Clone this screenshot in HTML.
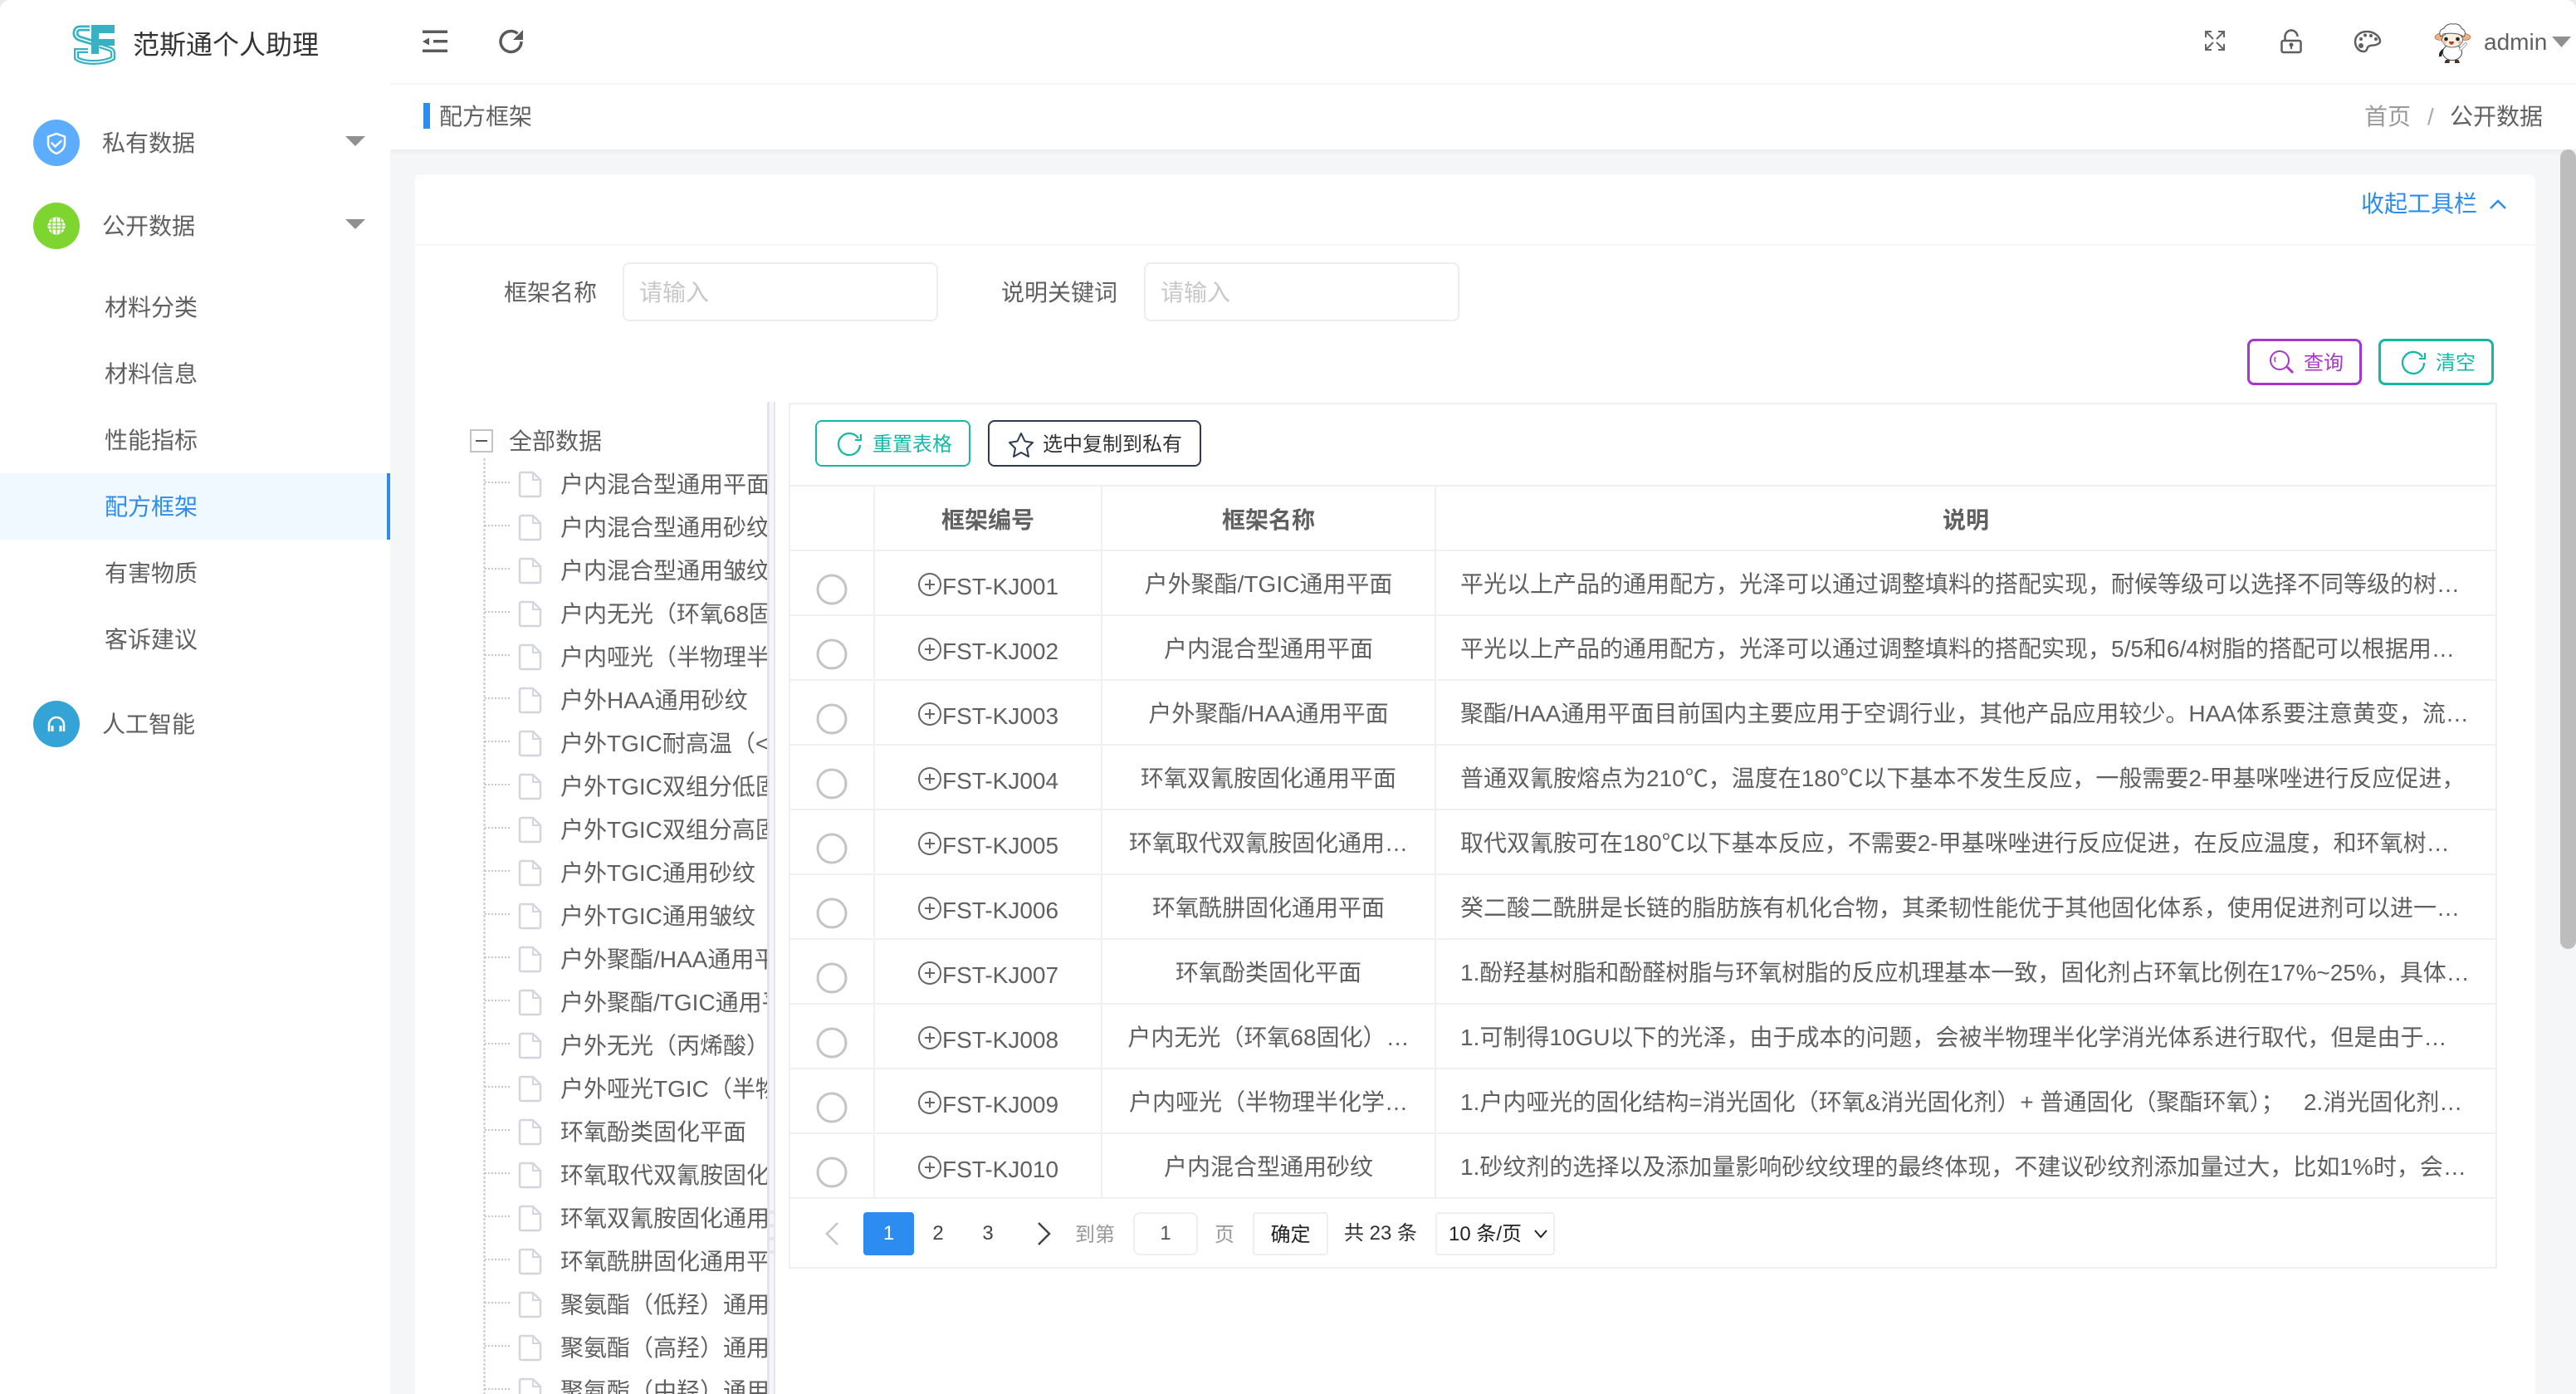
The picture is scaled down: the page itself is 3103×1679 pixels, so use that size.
<!DOCTYPE html>
<html lang="zh-CN"><head><meta charset="utf-8"><title>范斯通个人助理</title>
<style>
html,body{margin:0;padding:0;width:3103px;height:1679px;overflow:hidden;background:#fff}
body{position:relative;font-family:"Liberation Sans","Noto Sans CJK SC",sans-serif;font-size:28px;color:#606060}
.b{position:absolute;box-sizing:border-box}
.t{position:absolute;white-space:nowrap;line-height:40px;height:40px}
.c{text-align:center}
.m{color:#606060}
.tr{left:675px;width:249px;overflow:hidden;position:absolute;white-space:nowrap;line-height:40px;height:40px;color:#606060}
.l{position:absolute;background:#f0f0f0}
.s{font-size:24px}
svg{position:absolute;left:0;top:0}
</style></head><body>
<div class="b" style="left:470px;top:180px;width:2633px;height:1499px;background:#f4f6f8"></div>
<div class="b" style="left:470px;top:0;width:2633px;height:180px;background:#fff;box-shadow:0 2px 8px rgba(0,0,0,.06)"></div>
<div class="l" style="left:470px;top:100px;width:2633px;height:2px;background:#f5f5f5"></div>
<div class="b" style="left:0;top:0;width:470px;height:1679px;background:#fff"></div>
<div class="b" style="left:500px;top:210px;width:2554px;height:1469px;background:#fff;border-radius:8px 8px 0 0"></div>
<div class="l" style="left:500px;top:294px;width:2554px;height:2px;background:#f6f6f6"></div>
<div class="b" style="left:3084px;top:180px;width:19px;height:963px;background:#bdbdbd;border-radius:10px"></div>
<!-- sidebar -->
<div class="t" style="left:160px;top:34px;font-size:32px;color:#333">范斯通个人助理</div>
<div class="t m" style="left:123px;top:153px">私有数据</div>
<div class="t m" style="left:123px;top:253px">公开数据</div>
<div class="t m" style="left:126px;top:351px">材料分类</div>
<div class="t m" style="left:126px;top:431px">材料信息</div>
<div class="t m" style="left:126px;top:511px">性能指标</div>
<div class="b" style="left:0;top:570px;width:470px;height:80px;background:#f0f9ff;border-right:4px solid #2d8cf0"></div>
<div class="t" style="left:126px;top:591px;color:#2d8cf0">配方框架</div>
<div class="t m" style="left:126px;top:671px">有害物质</div>
<div class="t m" style="left:126px;top:751px">客诉建议</div>
<div class="t m" style="left:123px;top:853px">人工智能</div>
<!-- top -->
<div class="b" style="left:510px;top:124px;width:8px;height:31px;background:#2d8cf0"></div>
<div class="t m" style="left:529px;top:121px">配方框架</div>
<div class="t" style="left:2848px;top:121px;color:#999">首页</div>
<div class="t" style="left:2924px;top:121px;color:#aaa">/</div>
<div class="t m" style="left:2951px;top:121px">公开数据</div>
<div class="t m" style="left:2992px;top:31px;font-size:28px">admin</div>
<div class="t" style="left:2844px;top:226px;color:#2d8cf0">收起工具栏</div>
<!-- form -->
<div class="t m" style="left:607px;top:333px">框架名称</div>
<div class="b" style="left:750px;top:316px;width:380px;height:71px;border:2px solid #ededed;border-radius:8px"></div>
<div class="t" style="left:770px;top:333px;color:#c8c8c8">请输入</div>
<div class="t m" style="left:1206px;top:333px">说明关键词</div>
<div class="b" style="left:1378px;top:316px;width:380px;height:71px;border:2px solid #ededed;border-radius:8px"></div>
<div class="t" style="left:1398px;top:333px;color:#c8c8c8">请输入</div>
<div class="b" style="left:2707px;top:408px;width:138px;height:56px;border:3px solid #a835cc;border-radius:8px"></div>
<div class="t s" style="left:2775px;top:418px;color:#a835cc">查询</div>
<div class="b" style="left:2865px;top:408px;width:139px;height:56px;border:3px solid #14b8a6;border-radius:8px"></div>
<div class="t s" style="left:2934px;top:418px;color:#14b8a6">清空</div>
<!-- tree -->
<div class="b" style="left:566px;top:517px;width:28px;height:28px;border:2px solid #c0c4d0"></div>
<div class="b" style="left:573px;top:530px;width:14px;height:2px;background:#555"></div>
<div class="t m" style="left:613px;top:512px">全部数据</div>
<div class="tr" style="top:564px">户内混合型通用平面</div>
<div class="tr" style="top:616px">户内混合型通用砂纹</div>
<div class="tr" style="top:668px">户内混合型通用皱纹</div>
<div class="tr" style="top:720px">户内无光（环氧68固化）</div>
<div class="tr" style="top:772px">户内哑光（半物理半化学</div>
<div class="tr" style="top:824px">户外HAA通用砂纹</div>
<div class="tr" style="top:876px">户外TGIC耐高温（&lt;450</div>
<div class="tr" style="top:928px">户外TGIC双组分低固化</div>
<div class="tr" style="top:980px">户外TGIC双组分高固化</div>
<div class="tr" style="top:1032px">户外TGIC通用砂纹</div>
<div class="tr" style="top:1084px">户外TGIC通用皱纹</div>
<div class="tr" style="top:1136px">户外聚酯/HAA通用平面</div>
<div class="tr" style="top:1188px">户外聚酯/TGIC通用平面</div>
<div class="tr" style="top:1240px">户外无光（丙烯酸）</div>
<div class="tr" style="top:1292px">户外哑光TGIC（半物理半化学）</div>
<div class="tr" style="top:1344px">环氧酚类固化平面</div>
<div class="tr" style="top:1396px">环氧取代双氰胺固化通用</div>
<div class="tr" style="top:1448px">环氧双氰胺固化通用平面</div>
<div class="tr" style="top:1500px">环氧酰肼固化通用平面</div>
<div class="tr" style="top:1552px">聚氨酯（低羟）通用平面</div>
<div class="tr" style="top:1604px">聚氨酯（高羟）通用平面</div>
<div class="tr" style="top:1656px">聚氨酯（中羟）通用平面</div>
<div class="b" style="left:924px;top:484px;width:3px;height:1195px;background:#e4e4ec"></div>
<div class="b" style="left:927px;top:484px;width:5px;height:1195px;background:#f6f6f8"></div>
<div class="b" style="left:932px;top:484px;width:2px;height:1195px;background:#e4e4ec"></div>
<!-- table frame -->
<div class="b" style="left:950px;top:485px;width:2058px;height:1043px;border:2px solid #f0f0f0;background:#fff"></div>
<div class="l" style="left:952px;top:584px;width:2054px;height:2px"></div>
<div class="l" style="left:952px;top:662px;width:2054px;height:2px"></div>
<div class="l" style="left:952px;top:740px;width:2054px;height:2px"></div>
<div class="l" style="left:952px;top:818px;width:2054px;height:2px"></div>
<div class="l" style="left:952px;top:896px;width:2054px;height:2px"></div>
<div class="l" style="left:952px;top:974px;width:2054px;height:2px"></div>
<div class="l" style="left:952px;top:1052px;width:2054px;height:2px"></div>
<div class="l" style="left:952px;top:1130px;width:2054px;height:2px"></div>
<div class="l" style="left:952px;top:1208px;width:2054px;height:2px"></div>
<div class="l" style="left:952px;top:1286px;width:2054px;height:2px"></div>
<div class="l" style="left:952px;top:1364px;width:2054px;height:2px"></div>
<div class="l" style="left:952px;top:1442px;width:2054px;height:2px"></div>
<div class="l" style="left:1052px;top:586px;width:2px;height:856px"></div>
<div class="l" style="left:1326px;top:586px;width:2px;height:856px"></div>
<div class="l" style="left:1728px;top:586px;width:2px;height:856px"></div>
<!-- toolbar -->
<div class="b" style="left:982px;top:506px;width:187px;height:56px;border:2.5px solid #14b8a6;border-radius:8px"></div>
<div class="t s" style="left:1051px;top:516px;color:#14b8a6">重置表格</div>
<div class="b" style="left:1190px;top:506px;width:257px;height:56px;border:2.5px solid #2c3a52;border-radius:8px"></div>
<div class="t s" style="left:1256px;top:516px;color:#333">选中复制到私有</div>
<!-- header -->
<div class="t c" style="left:1054px;width:272px;top:607px;font-weight:bold">框架编号</div>
<div class="t c" style="left:1328px;width:400px;top:607px;font-weight:bold">框架名称</div>
<div class="t c" style="left:1730px;width:1276px;top:607px;font-weight:bold">说明</div>
<!-- rows -->
<div class="t" style="left:1135px;top:687px">FST-KJ001</div><div class="t c" style="left:1328px;width:400px;top:684px">户外聚酯/TGIC通用平面</div><div class="t" style="left:1759px;top:684px">平光以上产品的通用配方，光泽可以通过调整填料的搭配实现，耐候等级可以选择不同等级的树…</div>
<div class="t" style="left:1135px;top:765px">FST-KJ002</div><div class="t c" style="left:1328px;width:400px;top:762px">户内混合型通用平面</div><div class="t" style="left:1759px;top:762px">平光以上产品的通用配方，光泽可以通过调整填料的搭配实现，5/5和6/4树脂的搭配可以根据用…</div>
<div class="t" style="left:1135px;top:843px">FST-KJ003</div><div class="t c" style="left:1328px;width:400px;top:840px">户外聚酯/HAA通用平面</div><div class="t" style="left:1759px;top:840px">聚酯/HAA通用平面目前国内主要应用于空调行业，其他产品应用较少。HAA体系要注意黄变，流…</div>
<div class="t" style="left:1135px;top:921px">FST-KJ004</div><div class="t c" style="left:1328px;width:400px;top:918px">环氧双氰胺固化通用平面</div><div class="t" style="left:1759px;top:918px">普通双氰胺熔点为210℃，温度在180℃以下基本不发生反应，一般需要2-甲基咪唑进行反应促进，</div>
<div class="t" style="left:1135px;top:999px">FST-KJ005</div><div class="t c" style="left:1328px;width:400px;top:996px">环氧取代双氰胺固化通用…</div><div class="t" style="left:1759px;top:996px">取代双氰胺可在180℃以下基本反应，不需要2-甲基咪唑进行反应促进，在反应温度，和环氧树…</div>
<div class="t" style="left:1135px;top:1077px">FST-KJ006</div><div class="t c" style="left:1328px;width:400px;top:1074px">环氧酰肼固化通用平面</div><div class="t" style="left:1759px;top:1074px">癸二酸二酰肼是长链的脂肪族有机化合物，其柔韧性能优于其他固化体系，使用促进剂可以进一…</div>
<div class="t" style="left:1135px;top:1155px">FST-KJ007</div><div class="t c" style="left:1328px;width:400px;top:1152px">环氧酚类固化平面</div><div class="t" style="left:1759px;top:1152px">1.酚羟基树脂和酚醛树脂与环氧树脂的反应机理基本一致，固化剂占环氧比例在17%~25%，具体…</div>
<div class="t" style="left:1135px;top:1233px">FST-KJ008</div><div class="t c" style="left:1328px;width:400px;top:1230px">户内无光（环氧68固化）…</div><div class="t" style="left:1759px;top:1230px">1.可制得10GU以下的光泽，由于成本的问题，会被半物理半化学消光体系进行取代，但是由于…</div>
<div class="t" style="left:1135px;top:1311px">FST-KJ009</div><div class="t c" style="left:1328px;width:400px;top:1308px">户内哑光（半物理半化学…</div><div class="t" style="left:1759px;top:1308px">1.户内哑光的固化结构=消光固化（环氧&amp;消光固化剂）+ 普通固化（聚酯环氧）；&nbsp;&nbsp;&nbsp;2.消光固化剂…</div>
<div class="t" style="left:1135px;top:1389px">FST-KJ010</div><div class="t c" style="left:1328px;width:400px;top:1386px">户内混合型通用砂纹</div><div class="t" style="left:1759px;top:1386px">1.砂纹剂的选择以及添加量影响砂纹纹理的最终体现，不建议砂纹剂添加量过大，比如1%时，会…</div>
<!-- pagination -->
<div class="b" style="left:1040px;top:1460px;width:61px;height:52px;background:#2d8cf0;border-radius:4px"></div>
<div class="t s c" style="left:1040px;width:61px;top:1466px;color:#fff">1</div>
<div class="t s c" style="left:1100px;width:60px;top:1466px;color:#444">2</div>
<div class="t s c" style="left:1160px;width:60px;top:1466px;color:#444">3</div>
<div class="t s" style="left:1295px;top:1468px;color:#999">到第</div>
<div class="b" style="left:1365px;top:1460px;width:78px;height:52px;border:2px solid #eee;border-radius:8px"></div>
<div class="t s c" style="left:1365px;width:78px;top:1466px;color:#555">1</div>
<div class="t s" style="left:1463px;top:1468px;color:#999">页</div>
<div class="b" style="left:1509px;top:1460px;width:91px;height:52px;border:2px solid #eee;border-radius:4px"></div>
<div class="t s c" style="left:1509px;width:91px;top:1468px;color:#222">确定</div>
<div class="t s" style="left:1619px;top:1466px;color:#333">共 23 条</div>
<div class="b" style="left:1729px;top:1460px;width:144px;height:52px;border:2px solid #eee;border-radius:4px"></div>
<div class="t s" style="left:1745px;top:1467px;color:#222">10 条/页</div>
<!-- icons -->
<svg width="3103" height="1679" viewBox="0 0 3103 1679" fill="none">
<defs>
<symbol id="f" overflow="visible"><path d="M2 1h14l9 9v18a2 2 0 0 1-2 2H2a2 2 0 0 1-2-2V3a2 2 0 0 1 2-2z" stroke="#d2d6e0" stroke-width="2.5"/><path d="M16 1v9h9" stroke="#d2d6e0" stroke-width="2"/></symbol>
<symbol id="p" overflow="visible"><circle cx="1120" cy="704" r="13" stroke="#666" stroke-width="2"/><path d="M1114 704h12M1120 698v12" stroke="#666" stroke-width="2"/><circle cx="1002" cy="710" r="17" stroke="#c4c4c4" stroke-width="3"/></symbol>
</defs>
<!-- window corners -->
<path d="M0 12V0h12A12 12 0 0 0 0 12zM3103 12V0h-12a12 12 0 0 1 12 12z" fill="#eaeaea"/>
<!-- logo -->
<g fill="none">
<path d="M108 34H97c-5 0-6 3-6 6 0 4 3 6 7 7l13 4" stroke="#38b2c2" stroke-width="7"/>
<path d="M108 34H97c-5 0-6 3-6 6 0 4 3 6 7 7l13 4" stroke="#fff" stroke-width="1.600"/>
<path d="M120 55l12 4c3 1 4 3 4 5v6c-5 3-14 5-23 5-10 0-18-2-21-5v-9h14" stroke="#38b2c2" stroke-width="6"/>
<path d="M120 55l12 4c3 1 4 3 4 5v6c-5 3-14 5-23 5-10 0-18-2-21-5v-9h14" stroke="#fff" stroke-width="1.500"/>
</g>
<path d="M110 30h28v10h-19v7h19v8h-19v10h-9z" fill="#38b2c2"/>
<!-- sidebar icons -->
<circle cx="68" cy="172" r="28" fill="#5cadff"/>
<path d="M68 161l10 3.500v8c0 6-4 10-10 12.500-6-2.500-10-6.500-10-12.500v-8z" stroke="#fff" stroke-width="2.500" stroke-linejoin="round"/>
<path d="M62.500 172.500l4 4 7-6.500" stroke="#fff" stroke-width="2.500" stroke-linecap="round"/>
<circle cx="68" cy="272" r="28" fill="#7ed530"/>
<circle cx="68" cy="272" r="10.500" fill="#fff"/>
<g stroke="#7ed530" stroke-width="1.300"><path d="M58 268h20M58 272h20M58 276h20M68 262v20M63.500 263c-2 6-2 12 0 18M72.500 263c2 6 2 12 0 18"/></g>
<circle cx="68" cy="872" r="28" fill="#34a4d6"/>
<path d="M59 881v-8a9 9 0 0 1 18 0v8" stroke="#fff" stroke-width="2.500"/>
<path d="M63 874v7M73 874v7" stroke="#fff" stroke-width="3"/>
<path d="M416 164h24l-12 12zM416 264h24l-12 12z" fill="#909090"/>
<!-- header icons -->
<g fill="#5a5a5a"><rect x="509" y="36.500" width="30" height="3.500"/><rect x="522" y="48" width="17" height="3.500"/><rect x="509" y="59.500" width="30" height="3.500"/><path d="M517 45.500v9l-8-4.500z"/></g>
<path d="M628 50a12.500 12.500 0 1 1-4.500-9.600" stroke="#5a5a5a" stroke-width="3.500"/>
<path d="M630 36v12h-12z" fill="#5a5a5a"/>
<g stroke="#666" stroke-width="2"><path d="M2657 45v-7h7M2657 38l9 9M2679 45v-7h-7M2679 38l-9 9M2657 53v7h7M2657 60l9-9M2679 53v7h-7M2679 60l-9-9"/></g>
<rect x="2748.500" y="49" width="23" height="14" rx="2" stroke="#5f5f5f" stroke-width="2.500"/>
<path d="M2752.500 49v-5a7.500 7.500 0 0 1 15 0" stroke="#5f5f5f" stroke-width="2.500"/>
<circle cx="2760" cy="54" r="2.500" fill="#5f5f5f"/><path d="M2760 54v5" stroke="#5f5f5f" stroke-width="2"/>
<path d="M2851 38c-9 0-14 6-14 12 0 7 5 12 10 12 4 0 4-3 5-5 2-3 7-2 10-3 3-1 5-2 5-4 0-6-7-12-16-12z" stroke="#5f5f5f" stroke-width="2.500"/>
<g fill="#5f5f5f"><circle cx="2844" cy="47" r="2"/><circle cx="2849" cy="42.500" r="2"/><circle cx="2856" cy="43" r="2"/><circle cx="2862" cy="47" r="2"/><circle cx="2844" cy="55" r="3"/></g>
<!-- sheep -->
<path d="M2944 60c-3 2-5 5-4 8" stroke="#222" stroke-width="3.500"/>
<ellipse cx="2954" cy="63" rx="11.500" ry="9.500" fill="#fff" stroke="#444" stroke-width="1"/>
<path d="M2946 72l-1.500 4h6l.5-4zM2957 72v4h6l-1.500-4z" fill="#4a3226"/>
<path d="M2964 59l6-6" stroke="#888" stroke-width="3.500" stroke-linecap="round"/>
<path d="M2964 59l6-6" stroke="#fff" stroke-width="2" stroke-linecap="round"/>
<path d="M2942 40c-6 0-9 3-9 5 1 3 5 4 9 3zM2966 40c6 0 10 3 10 5-1 3-5 4-10 3z" fill="#f4b27c" stroke="#a96f3f" stroke-width=".8"/>
<ellipse cx="2954" cy="48" rx="12.500" ry="9" fill="#fbf0e0" stroke="#555" stroke-width=".8"/>
<path d="M2940 44c-3-5 0-9 4-10 2-4 7-6 11-5 4-1 9 1 10 5 4 2 6 6 3 10-3-1-4-2-7-3-6-1-13-1-18 0-1 2-2 2-3 3z" fill="#fff" stroke="#555" stroke-width="1"/>
<circle cx="2946.500" cy="47" r="2.300" fill="#222"/><circle cx="2960.500" cy="47" r="2.300" fill="#222"/>
<circle cx="2944" cy="51" r="2.200" fill="#f6b6b6"/><circle cx="2963" cy="51" r="2.200" fill="#f6b6b6"/>
<path d="M2950 50h6c0 5-6 5-6 0z" fill="#c0392b"/>
<path d="M3074 44h23l-11.500 13z" fill="#909090"/>
<!-- toggle chevron -->
<path d="M3000 251l9-9 9 9" stroke="#2d8cf0" stroke-width="2.500"/>
<!-- search / reset -->
<circle cx="2746" cy="434" r="11" stroke="#a835cc" stroke-width="2"/><path d="M2755 442l7 7" stroke="#a835cc" stroke-width="3"/><path d="M2741 430c-1.500 2-1.500 4 0 6" stroke="#a835cc" stroke-width="1.500"/>
<path d="M2918 430a13 13 0 1 0 2 7" stroke="#14b8a6" stroke-width="2.300"/><path d="M2921 425v7h-7" stroke="#14b8a6" stroke-width="2"/>
<path d="M1034 528a13 13 0 1 0 2 8" stroke="#14b8a6" stroke-width="2.300"/><path d="M1037 523v7h-7" stroke="#14b8a6" stroke-width="2"/>
<path d="M1230 522l4.500 9.500 9.500 1.500-7 7 2 10-9-5-9 5 2-10-7-7 9.500-1.500z" stroke="#2c3a52" stroke-width="2" stroke-linejoin="round"/>
<!-- tree lines -->
<path d="M583.500 552V1679" stroke="#c4c8d2" stroke-width="2" stroke-dasharray="3 2"/>
<g stroke="#c4c8d2" stroke-width="2" stroke-dasharray="2 2"><path d="M584 581h32M584 633h32M584 685h32M584 737h32M584 789h32M584 841h32M584 893h32M584 945h32M584 997h32M584 1049h32M584 1101h32M584 1153h32M584 1205h32M584 1257h32M584 1309h32M584 1361h32M584 1413h32M584 1465h32M584 1517h32M584 1569h32M584 1621h32M584 1673h32"/></g>
<use href="#f" x="626" y="568"/><use href="#f" x="626" y="620"/><use href="#f" x="626" y="672"/><use href="#f" x="626" y="724"/><use href="#f" x="626" y="776"/><use href="#f" x="626" y="828"/><use href="#f" x="626" y="880"/><use href="#f" x="626" y="932"/><use href="#f" x="626" y="984"/><use href="#f" x="626" y="1036"/><use href="#f" x="626" y="1088"/><use href="#f" x="626" y="1140"/><use href="#f" x="626" y="1192"/><use href="#f" x="626" y="1244"/><use href="#f" x="626" y="1296"/><use href="#f" x="626" y="1348"/><use href="#f" x="626" y="1400"/><use href="#f" x="626" y="1452"/><use href="#f" x="626" y="1504"/><use href="#f" x="626" y="1556"/><use href="#f" x="626" y="1608"/><use href="#f" x="626" y="1660"/>
<path d="M927 1460h5M927 1476h5M927 1492h5M927 1508h5" stroke="#e4e4ec" stroke-width="4"/>
<!-- row icons -->
<use href="#p" y="0"/><use href="#p" y="78"/><use href="#p" y="156"/><use href="#p" y="234"/><use href="#p" y="312"/><use href="#p" y="390"/><use href="#p" y="468"/><use href="#p" y="546"/><use href="#p" y="624"/><use href="#p" y="702"/>
<!-- pagination icons -->
<path d="M1009 1473l-13 13 13 13" stroke="#c5c5c5" stroke-width="2.500"/>
<path d="M1251 1473l13 13-13 13" stroke="#444" stroke-width="2.500"/>
<path d="M1849 1482l7 8 7-8" stroke="#222" stroke-width="2"/>
</svg>
</body></html>
